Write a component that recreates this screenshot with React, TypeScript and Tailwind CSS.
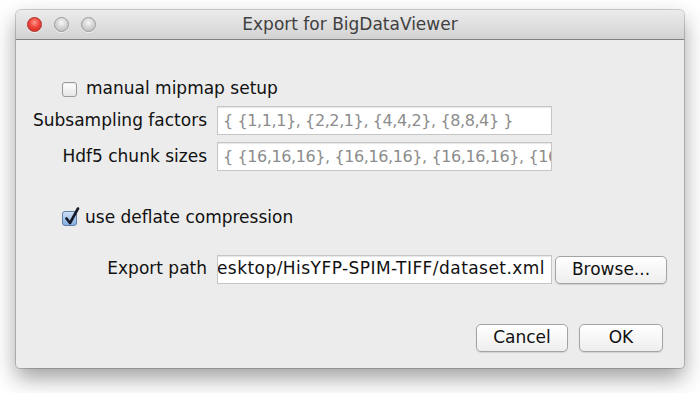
import React from "react";

const font = { fontFamily: '"DejaVu Sans", "Liberation Sans", sans-serif' };

function Light({ red }: { red?: boolean }) {
  return red ? (
    <div className="w-[15px] h-[15px] rounded-full border border-[#b0322b] bg-[radial-gradient(circle_at_50%_35%,#ff9a8e_0%,#f0443a_45%,#c8251d_100%)] shadow-[0_1px_0_rgba(255,255,255,0.6)]" />
  ) : (
    <div className="w-[15px] h-[15px] rounded-full border border-[#9c9c9c] bg-[radial-gradient(circle_at_50%_35%,#f6f6f6_0%,#d4d4d4_50%,#b4b4b4_100%)] shadow-[0_1px_0_rgba(255,255,255,0.6)]" />
  );
}

function Checkbox({ checked }: { checked?: boolean }) {
  if (!checked) {
    return (
      <div className="w-[15px] h-[15px] rounded-[3px] border border-[#9a9a9a] bg-gradient-to-b from-[#ffffff] to-[#e6e6e6] shadow-[inset_0_1px_1px_rgba(0,0,0,0.08)]" />
    );
  }
  return (
    <div className="relative w-[15px] h-[15px] rounded-[3px] border border-[#5f7fa8] bg-gradient-to-b from-[#cfe0f5] to-[#86aee0]">
      <svg className="absolute left-[1px] top-[-5px]" width="16" height="19" viewBox="0 0 16 19">
        <path d="M2.5 11.5 L6 16 L14 1.5" fill="none" stroke="#15192a" strokeWidth="2.6" strokeLinecap="round" strokeLinejoin="round" />
      </svg>
    </div>
  );
}

function Field({ children, disabled, end }: { children: React.ReactNode; disabled?: boolean; end?: boolean }) {
  return (
    <div
      className={
        "w-[335px] h-[29px] bg-white border border-[#c6c6c6] shadow-[inset_0_1px_1px_rgba(0,0,0,0.1)] flex items-center overflow-hidden whitespace-nowrap " +
        (end ? "justify-end pr-[6px] tracking-[0.45px]" : "justify-start pl-[5px] text-[16px] tracking-[-0.4px]") +
        (disabled ? " text-[#8c8c8c]" : " text-[#111]")
      }
    >
      <span className="shrink-0">{children}</span>
    </div>
  );
}

function Button({ children, w }: { children: React.ReactNode; w: string }) {
  return (
    <div
      className={
        w +
        " h-[28px] rounded-[5px] border border-[#a3a3a3] bg-gradient-to-b from-[#ffffff] to-[#eeeeee] shadow-[0_1px_1px_rgba(0,0,0,0.12)] flex items-center justify-center text-[#111]"
      }
    >
      {children}
    </div>
  );
}

export default function App() {
  return (
    <div className="w-[700px] h-[393px] bg-white pt-[10px] pl-[16px]" style={font}>
      <div className="w-[668px] h-[358px] rounded-t-[5px] rounded-b-[4px] bg-[#ececec] shadow-[0_10px_22px_rgba(0,0,0,0.38),0_0_0_1px_rgba(0,0,0,0.18)] overflow-hidden flex flex-col text-[17px] text-[#111]">
        <div className="relative h-[30px] shrink-0 bg-gradient-to-b from-[#ececec] to-[#d2d2d2] border-b border-[#7f7f7f] flex items-center">
          <div className="flex items-center gap-[12px] pl-[11px]">
            <Light red />
            <Light />
            <Light />
          </div>
          <div className="absolute inset-0 flex items-center justify-center text-[#404040] pt-[1px]">
            Export for BigDataViewer
          </div>
        </div>

        <div className="flex flex-col">
          <div className="flex items-center gap-[9px] pl-[46px] mt-[40px] h-[18px]">
            <Checkbox />
            <span>manual mipmap setup</span>
          </div>

          <div className="flex items-center mt-[8px]">
            <div className="w-[191px] text-right">Subsampling factors</div>
            <div className="ml-[10px]">
              <Field disabled>{"{ {1,1,1}, {2,2,1}, {4,4,2}, {8,8,4} }"}</Field>
            </div>
          </div>

          <div className="flex items-center mt-[7px]">
            <div className="w-[191px] text-right">Hdf5 chunk sizes</div>
            <div className="ml-[10px]">
              <Field disabled>{"{ {16,16,16}, {16,16,16}, {16,16,16}, {16,16,16} }"}</Field>
            </div>
          </div>

          <div className="flex items-center gap-[8px] pl-[46px] mt-[38px] h-[18px]">
            <Checkbox checked />
            <span>use deflate compression</span>
          </div>

          <div className="flex items-center mt-[27px]">
            <div className="w-[191px] text-right">Export path</div>
            <div className="ml-[10px]">
              <Field end>/Users/pietzsch/Desktop/HisYFP-SPIM-TIFF/dataset.xml</Field>
            </div>
            <div className="ml-[3px] mt-[2px]">
              <Button w="w-[112px]">Browse...</Button>
            </div>
          </div>

          <div className="flex justify-end gap-[11px] pr-[21px] mt-[40px]">
            <Button w="w-[92px]">Cancel</Button>
            <Button w="w-[84px]">OK</Button>
          </div>
        </div>
      </div>
    </div>
  );
}
